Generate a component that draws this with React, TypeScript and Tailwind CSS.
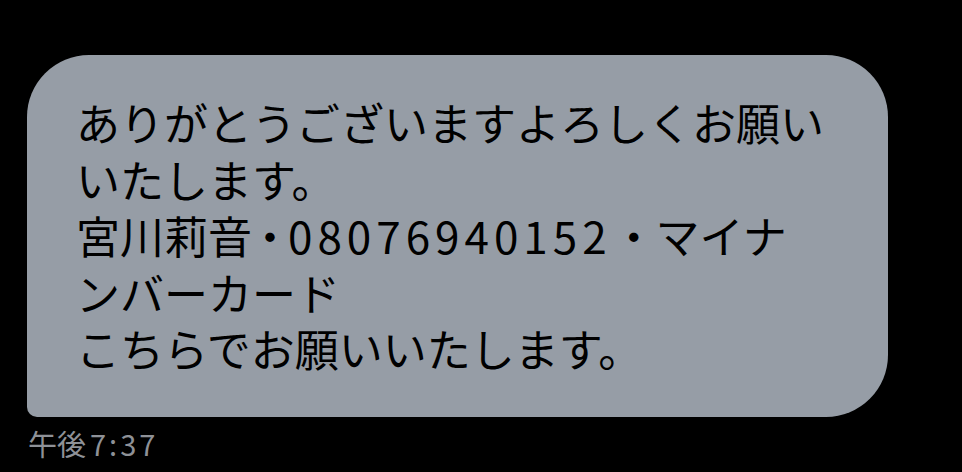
import React from 'react';

const lines: React.ReactNode[] = [
  'ありがとうございますよろしくお願い',
  'いたします。',
  <>
    宮川莉音<span className="-mx-[4px]">・</span>
    <span className="tracking-[5px]">08076940152</span>・マイナ
  </>,
  'ンバーカード',
  'こちらでお願いいたします。',
];

export default function App() {
  return (
    <div
      className="w-full h-[472px] bg-black pl-[27px] pt-[55px] overflow-hidden"
      style={{ fontFamily: '"Noto Sans CJK JP", "Noto Sans", sans-serif' }}
    >
      {/* message bubble */}
      <div className="w-[861px] bg-[#969da6] rounded-tl-[62px] rounded-tr-[62px] rounded-br-[62px] rounded-bl-[10px] pl-[49px] pt-[39px] pb-[40px]">
        {lines.map((line, i) => (
          <div key={i} className="whitespace-nowrap text-[44px] leading-[56.6px] text-black">
            {line}
          </div>
        ))}
      </div>

      {/* timestamp */}
      <div className="mt-[9px] pl-[1px] text-[29px] leading-[34px] text-[#8e9197] whitespace-nowrap">
        午後<span className="ml-[4px] tracking-[3px]">7:37</span>
      </div>
    </div>
  );
}
